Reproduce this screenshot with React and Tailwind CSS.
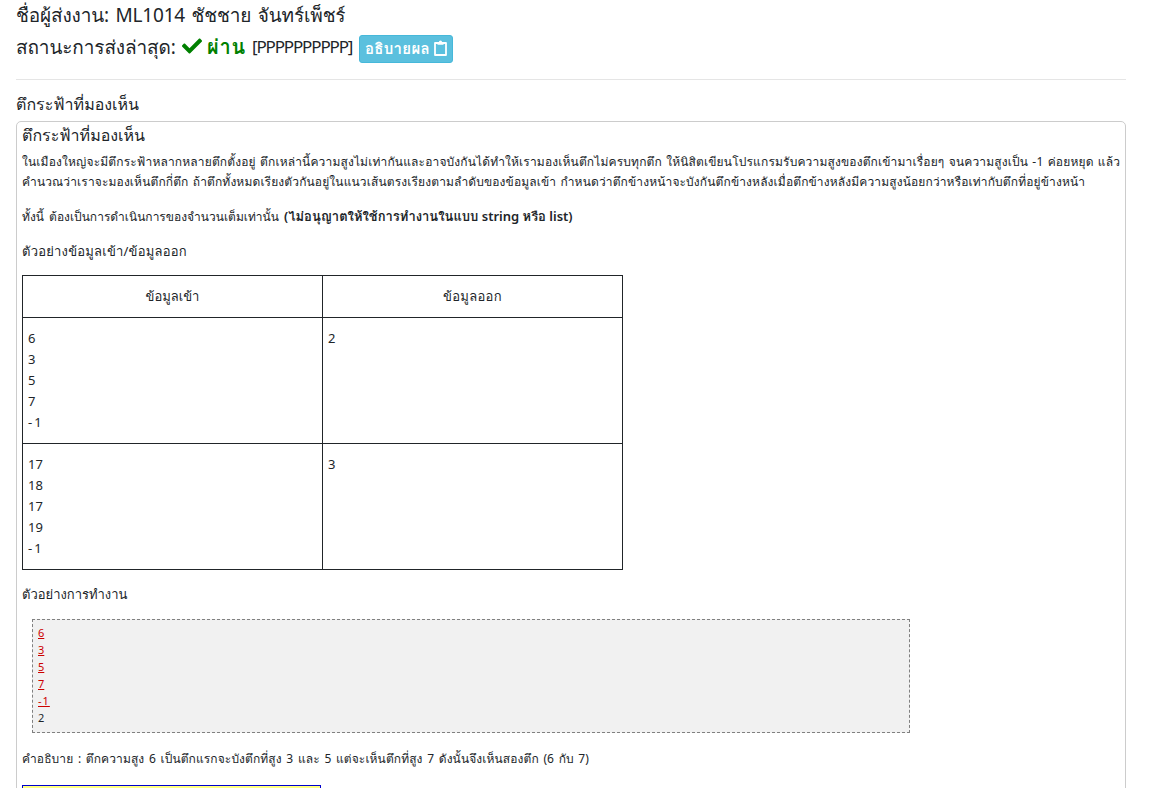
import React from "react";
import { FaCheck } from "react-icons/fa";

const inputs = [
  { lines: ["6", "3", "5", "7", "-1"], out: "2" },
  { lines: ["17", "18", "17", "19", "-1"], out: "3" },
];

function ClipboardIcon() {
  return (
    <svg viewBox="0 0 13 16" className="h-4 w-[13px]" fill="none" stroke="currentColor">
      <path d="M1 3h11v12H1z" strokeWidth="1.8" strokeLinejoin="round" />
      <path d="M3.5 2.2h1.4a1.6 1.6 0 0 1 3.2 0h1.4v2.6h-6z" fill="currentColor" stroke="none" />
    </svg>
  );
}

export default function App() {
  return (
    <div className="h-[788px] w-[1164px] overflow-hidden bg-white pl-4 pr-[38px] font-['Noto_Sans','Loma','Noto_Sans_Thai_Looped',sans-serif] text-[#212529]">
      <div className="flex h-[29px] items-center whitespace-nowrap text-[19px] leading-[30px] tracking-[-0.16px] [word-spacing:1.7px]">
        <span>ชื่อผู้ส่งงาน: ML1014 ชัชชาย จันทร์เพ็ชร์</span>
      </div>
      <div className="flex h-[39px] items-center whitespace-nowrap text-[19px] leading-[30px]">
        <span className="-mt-1 w-[166px] tracking-[-0.12px]">สถานะการส่งล่าสุด:</span>
        <FaCheck className="-mt-1.5 mr-[5px] h-5 w-5 text-[#008000]" />
        <span className="-mt-1 w-[45px] text-[20px] font-bold tracking-[0.8px] text-[#008000]">ผ่าน</span>
        <span className="-mt-1 w-[107px] text-[17px] tracking-[-1.15px]">[PPPPPPPPPP]</span>
        <button className="flex h-7 w-[94px] items-center justify-center gap-1 rounded-[3px] border border-[#46b8da] bg-[#5bc0de] pb-0.5 text-[15px] font-bold text-white">
          <span className="tracking-[0.3px]">อธิบายผล</span>
          <ClipboardIcon />
        </button>
      </div>
      <div className="mt-[11px] border-t border-[#e5e5e5]" />
      <div className="mt-3 h-[29px] text-[16px] leading-6">ตึกระฟ้าที่มองเห็น</div>
      <div className="h-[700px] rounded-[5px] border border-[#cccccc] px-[5px] text-[13px]">
        <div className="h-[30px] text-[16px] leading-[26px]">ตึกระฟ้าที่มองเห็น</div>
        <div className="whitespace-nowrap text-[12px] leading-5 [word-spacing:1px]">
          <div className="tracking-[0.15px]">ในเมืองใหญ่จะมีตึกระฟ้าหลากหลายตึกตั้งอยู่ ตึกเหล่านี้ความสูงไม่เท่ากันและอาจบังกันได้ทำให้เรามองเห็นตึกไม่ครบทุกตึก ให้นิสิตเขียนโปรแกรมรับความสูงของตึกเข้ามาเรื่อยๆ จนความสูงเป็น -1 ค่อยหยุด แล้ว</div>
          <div className="tracking-[0.13px]">คำนวณว่าเราจะมองเห็นตึกกี่ตึก ถ้าตึกทั้งหมดเรียงตัวกันอยู่ในแนวเส้นตรงเรียงตามลำดับของข้อมูลเข้า กำหนดว่าตึกข้างหน้าจะบังกันตึกข้างหลังเมื่อตึกข้างหลังมีความสูงน้อยกว่าหรือเท่ากับตึกที่อยู่ข้างหน้า</div>
        </div>
        <div className="mt-[14px] whitespace-nowrap text-[12px] leading-[21px]">
          <span className="[word-spacing:2px]">ทั้งนี้ ต้องเป็นการดำเนินการของจำนวนเต็มเท่านั้น </span>
          <b className="text-[13px] font-semibold">(ไม่อนุญาตให้ใช้การทำงานในแบบ string หรือ list)</b>
        </div>
        <div className="mt-3.5 leading-[21px] tracking-[0.22px]">ตัวอย่างข้อมูลเข้า/ข้อมูลออก</div>
        <table className="mt-[13px] w-[601px] table-fixed border-collapse border border-black leading-[21px]">
          <tbody>
            <tr className="h-[42px] text-center">
              <td className="border border-[#212529] p-0">ข้อมูลเข้า</td>
              <td className="border border-[#212529] p-0 tracking-[0.3px]">ข้อมูลออก</td>
            </tr>
            {inputs.map((r, i) => (
              <tr key={i} className="h-[126px] align-top">
                <td className="border border-[#212529] px-[5px] pt-[10px] pb-0">
                  {r.lines.map((l, j) => (
                    <div key={j} className={l.startsWith("-") ? "tracking-[2px]" : ""}>{l}</div>
                  ))}
                </td>
                <td className="border border-[#212529] px-[5px] pt-[10px] pb-0">{r.out}</td>
              </tr>
            ))}
          </tbody>
        </table>
        <div className="mt-[14px] leading-[21px]">ตัวอย่างการทำงาน</div>
        <div className="mt-[14px] ml-[10px] h-[114px] w-[878px] border border-dashed border-[#808080] bg-[#f1f1f1] px-[5px] pt-[4px] text-[11px] leading-[17px]">
          {inputs[0].lines.map((l) => (
            <div key={l} className="text-[#cc0000]">
              <span className={l.startsWith("-") ? "tracking-[1px] underline" : "underline"}>{l}</span>
            </div>
          ))}
          <div>2</div>
        </div>
        <div className="mt-[15px] whitespace-nowrap text-[12px] leading-[21px] tracking-[0.1px] [word-spacing:1.4px]">คำอธิบาย : ตึกความสูง 6 เป็นตึกแรกจะบังตึกที่สูง 3 และ 5 แต่จะเห็นตึกที่สูง 7 ดังนั้นจึงเห็นสองตึก (6 กับ 7)</div>
        <div className="mt-4 h-10 w-[299px] border border-[#0000cc] bg-[#ffff80]" />
      </div>
    </div>
  );
}
